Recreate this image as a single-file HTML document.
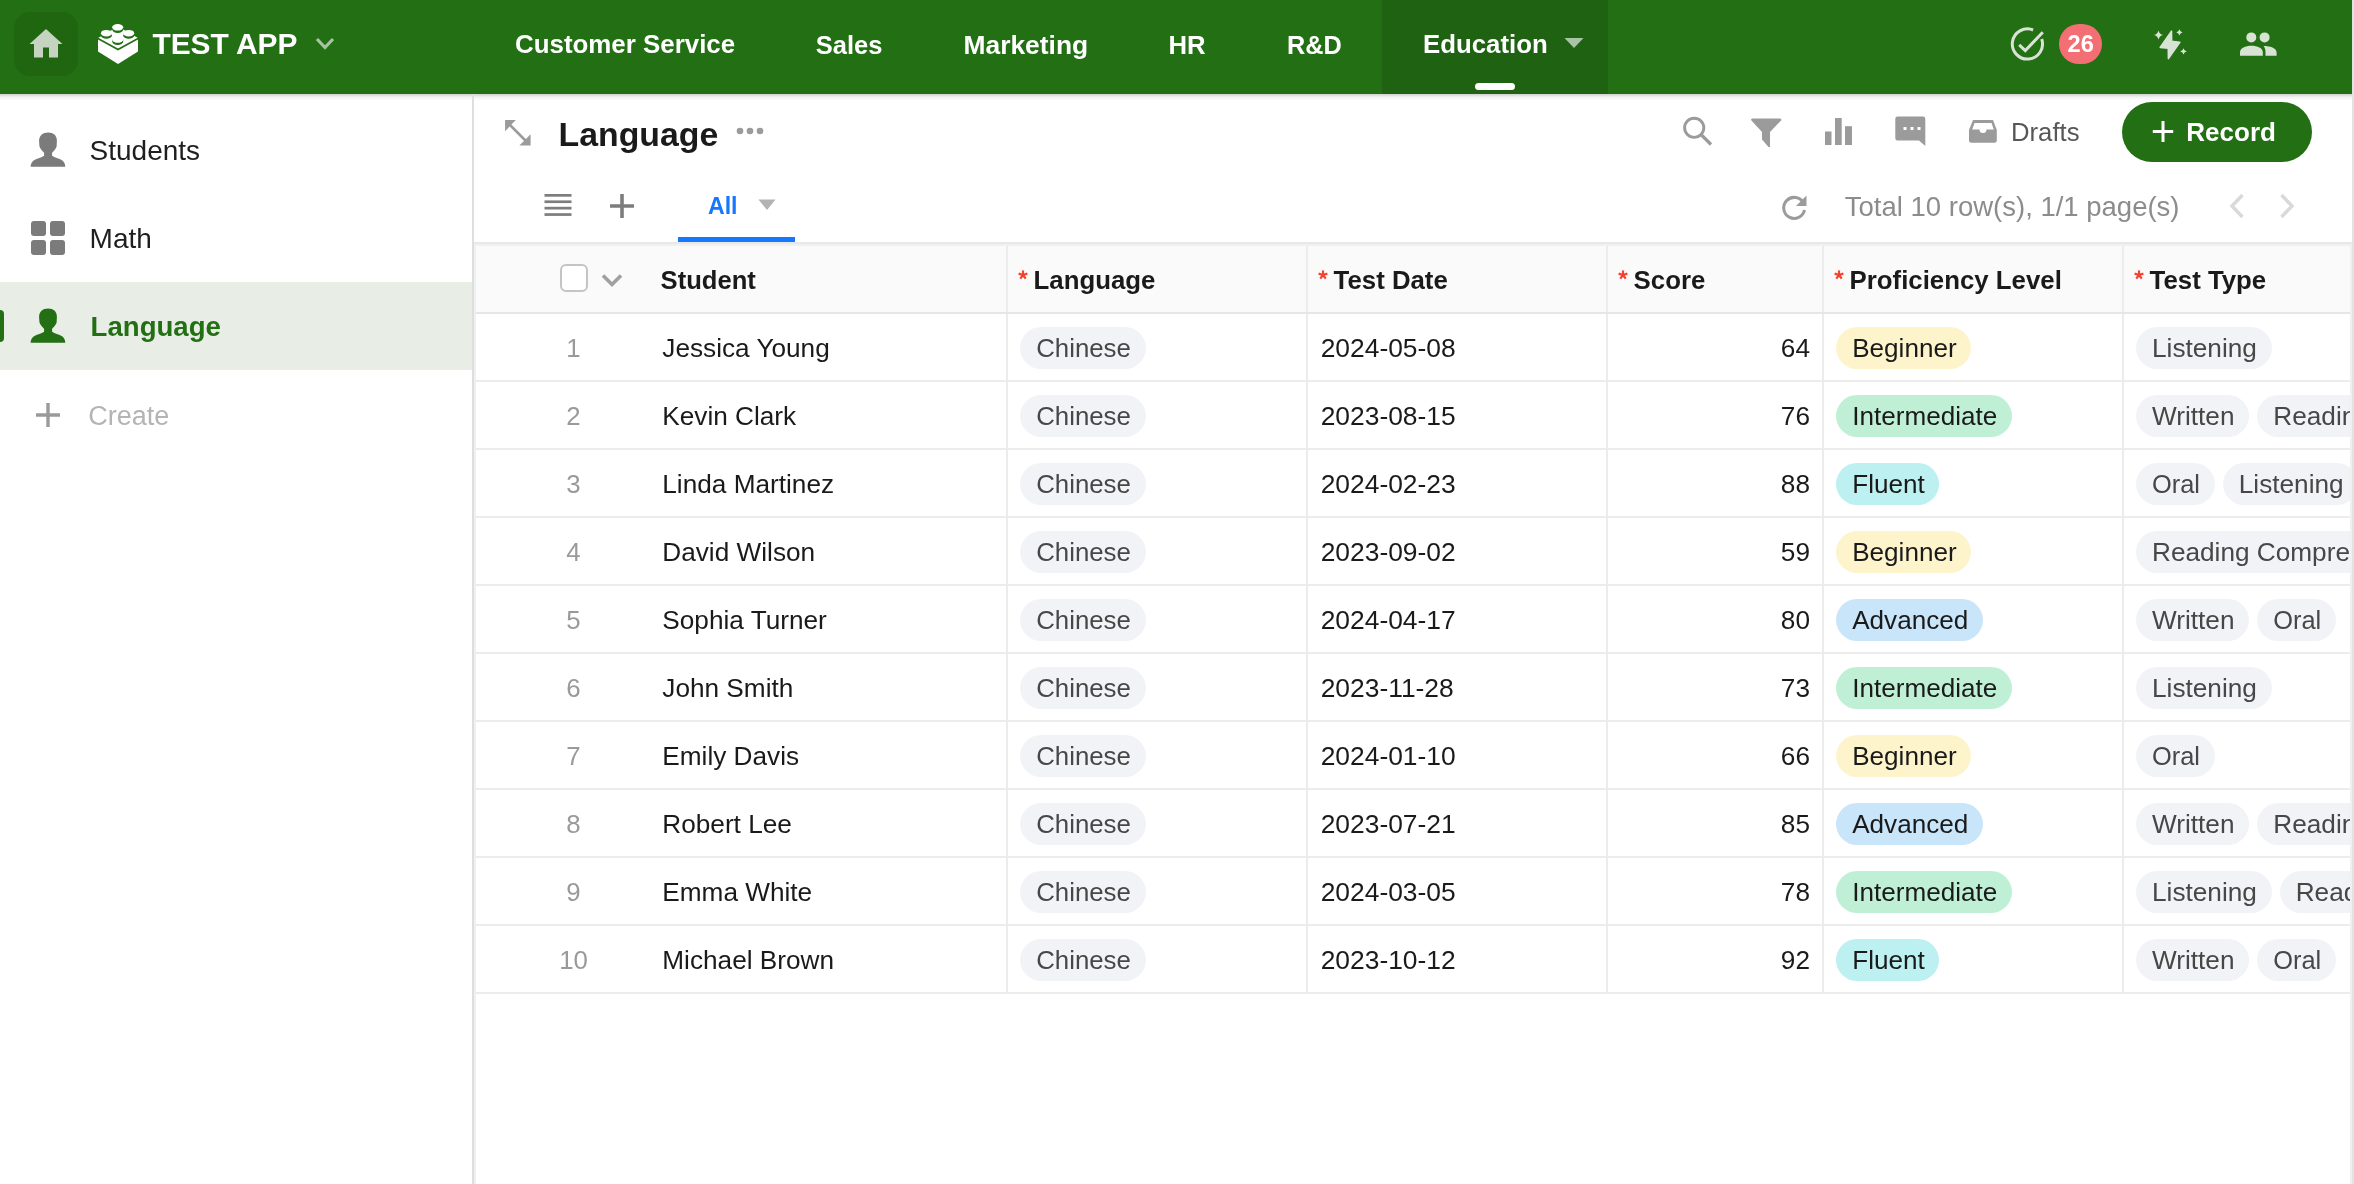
<!DOCTYPE html>
<html><head><meta charset="utf-8"><title>Language</title>
<style>
html,body{margin:0;padding:0;}
body{width:2354px;height:1184px;overflow:hidden;position:relative;background:#fff;font-family:"Liberation Sans",sans-serif;}
.t{position:absolute;white-space:nowrap;}
#root{position:absolute;left:0;top:0;width:2354px;height:1184px;will-change:transform;}
svg{display:block;}
</style></head><body><div id="root">
<div style="position:absolute;left:0px;top:0px;width:2352px;height:94px;background:#236f14;"></div>
<div style="position:absolute;left:0px;top:94px;width:2352px;height:7px;background:linear-gradient(rgba(0,0,0,0.19),rgba(0,0,0,0.05) 45%,rgba(0,0,0,0));"></div>
<div style="position:absolute;left:14px;top:12px;width:64px;height:64px;background:#20650f;border-radius:16px;"></div>
<svg style="position:absolute;left:29px;top:28px;" width="34" height="30" viewBox="0 0 34 30"><path d="M17 1 L33.5 16 L29 16 L29 29.5 L20 29.5 L20 19.5 L14 19.5 L14 29.5 L5 29.5 L5 16 L0.5 16 Z" fill="#c4d4c0"/></svg>
<svg style="position:absolute;left:96px;top:22px;" width="44" height="44" viewBox="0 0 44 44"><path d="M2 16 L22 4.5 L42 16 L42 29.6 L22 42.1 L2 29.6 Z" fill="#fff"/><path d="M1.5 16.2 L22 27.5 L42.5 16.2" fill="none" stroke="#236f14" stroke-width="1.7"/><ellipse cx="21.7" cy="7.6" rx="5.5" ry="3.3" fill="#236f14"/><ellipse cx="21.7" cy="5.3" rx="5.5" ry="3.3" fill="#fff"/><ellipse cx="10.4" cy="13.5" rx="5.5" ry="3.3" fill="#236f14"/><ellipse cx="10.4" cy="11.2" rx="5.5" ry="3.3" fill="#fff"/><ellipse cx="32.7" cy="13.5" rx="5.5" ry="3.3" fill="#236f14"/><ellipse cx="32.7" cy="11.2" rx="5.5" ry="3.3" fill="#fff"/><path d="M16.2 17.3 A5.5 3.3 0 0 0 27.2 17.3 L27.2 19.6 A5.5 3.3 0 0 1 16.2 19.6 Z" fill="#236f14"/><path d="M16.2 17.3 A5.5 3.3 0 0 0 27.2 17.3 L27.2 17.3 A5.5 1.2 0 0 1 16.2 17.3 Z" fill="#fff"/></svg>
<div class="t" style="left:152.40px;top:29.49px;font-size:29.9px;line-height:29.9px;color:#fff;font-weight:bold;">TEST APP</div>
<svg style="position:absolute;left:314px;top:36px;" width="22" height="16" viewBox="0 0 22 16"><path d="M3 3 L11 11.5 L19 3" fill="none" stroke="#a8c3a2" stroke-width="3.2"/></svg>
<div style="position:absolute;left:1382px;top:0px;width:226px;height:94px;background:#1f6212;"></div>
<div class="t" style="left:515.00px;top:32.38px;font-size:25.9px;line-height:25.9px;color:#fff;font-weight:bold;">Customer Service</div>
<div class="t" style="left:815.70px;top:32.71px;font-size:25.5px;line-height:25.5px;color:#fff;font-weight:bold;">Sales</div>
<div class="t" style="left:963.50px;top:31.95px;font-size:26.4px;line-height:26.4px;color:#fff;font-weight:bold;">Marketing</div>
<div class="t" style="left:1168.50px;top:32.54px;font-size:25.7px;line-height:25.7px;color:#fff;font-weight:bold;">HR</div>
<div class="t" style="left:1287.00px;top:32.88px;font-size:25.3px;line-height:25.3px;color:#fff;font-weight:bold;">R&amp;D</div>
<div class="t" style="left:1423.00px;top:32.46px;font-size:25.8px;line-height:25.8px;color:#fff;font-weight:bold;">Education</div>
<svg style="position:absolute;left:1563px;top:37px;" width="22" height="12" viewBox="0 0 22 12"><path d="M1.5 1 L20.5 1 L11 11 Z" fill="#a9c4a4"/></svg>
<div style="position:absolute;left:1475px;top:83px;width:40px;height:7px;background:#fff;border-radius:4px;"></div>
<svg style="position:absolute;left:2008px;top:25px;" width="40" height="40" viewBox="0 0 40 40"><path d="M33.7 14.1 A15.1 15.1 0 1 1 25.1 5.0" fill="none" stroke="#d8e3d5" stroke-width="3"/><path d="M11.2 19.9 L17.3 25.6 L34.8 7.2" fill="none" stroke="#d8e3d5" stroke-width="3"/></svg>
<div style="position:absolute;left:2059px;top:24px;width:43px;height:40px;background:#f46f73;border-radius:20px;"></div>
<div class="t" style="left:2067.60px;top:32.82px;font-size:23.6px;line-height:23.6px;color:#fff;font-weight:bold;">26</div>
<svg style="position:absolute;left:2153px;top:28px;" width="36" height="34" viewBox="0 0 36 34"><g fill="#d8e3d5" stroke="#d8e3d5" stroke-linejoin="round" stroke-width="1.6"><path d="M18.5 3.2 L18.6 13.4 L26.8 14.2 L15.4 30.6 L15.3 20.3 L7.2 19.5 Z"/></g><g fill="#d8e3d5"><path d="M5.5 2.4000000000000004 Q6.328 6.172 10.1 7 Q6.328 7.828 5.5 11.6 Q4.672 7.828 0.9000000000000004 7 Q4.672 6.172 5.5 2.4000000000000004 Z"/><path d="M26.4 1.3000000000000003 Q26.958 3.8420000000000005 29.5 4.4 Q26.958 4.958 26.4 7.5 Q25.842 4.958 23.299999999999997 4.4 Q25.842 3.8420000000000005 26.4 1.3000000000000003 Z"/><path d="M30.5 20.2 Q31.076 22.823999999999998 33.7 23.4 Q31.076 23.976 30.5 26.599999999999998 Q29.924 23.976 27.3 23.4 Q29.924 22.823999999999998 30.5 20.2 Z"/></g></svg>
<svg style="position:absolute;left:2238px;top:30px;" width="40" height="28" viewBox="0 0 40 28"><g fill="#d8e3d5">
<circle cx="13.3" cy="7.4" r="5"/><circle cx="26.6" cy="7.4" r="5"/>
<path d="M2 25.7 L2 22.5 C2 18 7.5 15.8 13.3 15.8 C19.4 15.8 24.8 18 24.8 22.5 L24.8 25.7 Z"/>
<path d="M25.6 16 C32 16 38.6 18 38.6 22.5 L38.6 25.7 L27.5 25.7 L27.5 22 C27.5 19.5 26.8 17.5 25.6 16 Z"/>
</g></svg>
<div style="position:absolute;left:2352px;top:0px;width:2px;height:1184px;background:#e4e4e4;"></div>
<div style="position:absolute;left:472px;top:94px;width:2px;height:1090px;background:#dedede;"></div>
<svg style="position:absolute;left:30px;top:132px;" width="36" height="36" viewBox="0 0 36 36"><path fill="#7b7b7b" d="M18.2 0.4 C23.3 0.4 26.9 3.3 26.9 8.6 C26.9 10.8 26.7 12.3 26.7 13.7 C26.7 15.2 25.5 17.3 22.1 20.8 L22.1 23.8 C24 25.4 28 26.4 30.2 27.3 C33.6 28.8 35.3 31.5 35.3 34.8 L0.6 34.8 C0.6 31.5 2.4 28.8 5.9 27.3 C8 26.4 12.2 25.4 14.1 23.8 L14.1 20.8 C10.7 17.3 9.4 15.2 9.4 13.7 C9.4 12.3 9.1 10.8 9.1 8.8 C9.1 3.6 12.6 0.4 18.2 0.4 Z"/></svg>
<div class="t" style="left:89.60px;top:136.70px;font-size:28px;line-height:28px;color:#1f1f1f;font-weight:normal;">Students</div>
<svg style="position:absolute;left:31px;top:221px;" width="34" height="34" viewBox="0 0 34 34"><g fill="#7b7b7b"><rect x="0" y="0" width="15" height="15" rx="3"/><rect x="19" y="0" width="15" height="15" rx="3"/><rect x="0" y="19" width="15" height="15" rx="3"/><rect x="19" y="19" width="15" height="15" rx="3"/></g></svg>
<div class="t" style="left:89.60px;top:224.50px;font-size:28px;line-height:28px;color:#1f1f1f;font-weight:normal;">Math</div>
<div style="position:absolute;left:0px;top:282px;width:472px;height:88px;background:#e8eee6;"></div>
<div style="position:absolute;left:-4px;top:310px;width:8px;height:32px;background:#236f14;border-radius:4px;"></div>
<svg style="position:absolute;left:30px;top:308px;" width="36" height="36" viewBox="0 0 36 36"><path fill="#236f14" d="M18.2 0.4 C23.3 0.4 26.9 3.3 26.9 8.6 C26.9 10.8 26.7 12.3 26.7 13.7 C26.7 15.2 25.5 17.3 22.1 20.8 L22.1 23.8 C24 25.4 28 26.4 30.2 27.3 C33.6 28.8 35.3 31.5 35.3 34.8 L0.6 34.8 C0.6 31.5 2.4 28.8 5.9 27.3 C8 26.4 12.2 25.4 14.1 23.8 L14.1 20.8 C10.7 17.3 9.4 15.2 9.4 13.7 C9.4 12.3 9.1 10.8 9.1 8.8 C9.1 3.6 12.6 0.4 18.2 0.4 Z"/></svg>
<div class="t" style="left:90.60px;top:313.14px;font-size:27.6px;line-height:27.6px;color:#236f14;font-weight:bold;">Language</div>
<svg style="position:absolute;left:35px;top:402px;" width="26" height="26" viewBox="0 0 26 26"><path d="M13 1 V25 M1 13 H25" stroke="#9a9a9a" stroke-width="3.4"/></svg>
<div class="t" style="left:88.30px;top:402.74px;font-size:27px;line-height:27px;color:#b4b4b4;font-weight:normal;">Create</div>
<svg style="position:absolute;left:503px;top:118px;" width="30" height="30" viewBox="0 0 30 30"><path fill="#9b9b9b" d="M2.1 1.9 L12.9 1.9 L8.4 6.6 L22.9 21.0 L27.6 16.3 L27.6 27.6 L16.3 27.6 L21.0 22.9 L6.6 8.4 L2.1 13.2 Z"/></svg>
<div class="t" style="left:558.60px;top:117.99px;font-size:33.8px;line-height:33.8px;color:#1a1a1a;font-weight:bold;">Language</div>
<svg style="position:absolute;left:735px;top:126px;" width="32" height="10" viewBox="0 0 32 10"><g fill="#9b9b9b"><circle cx="5" cy="5" r="3.3"/><circle cx="15" cy="5" r="3.3"/><circle cx="25" cy="5" r="3.3"/></g></svg>
<svg style="position:absolute;left:1681px;top:114px;" width="34" height="34" viewBox="0 0 34 34"><circle cx="13.2" cy="13.8" r="9.6" fill="none" stroke="#9b9b9b" stroke-width="2.9"/><path d="M20 20.5 L30 30.5" stroke="#9b9b9b" stroke-width="3.2"/></svg>
<svg style="position:absolute;left:1750px;top:117px;" width="34" height="32" viewBox="0 0 34 32"><path fill="#9b9b9b" d="M1 3 Q1 1.5 2.5 1.5 L30 1.5 Q31.5 1.5 31.5 3 L20 15 L20 30 L18.5 30 L12 22.5 L12 15 Z"/></svg>
<svg style="position:absolute;left:1824px;top:116px;" width="30" height="32" viewBox="0 0 30 32"><g fill="#9b9b9b"><rect x="1" y="15.5" width="6.5" height="13.5"/><rect x="11" y="2" width="6.7" height="27"/><rect x="21" y="10.2" width="7" height="18.8"/></g></svg>
<svg style="position:absolute;left:1894px;top:115px;" width="34" height="34" viewBox="0 0 34 34"><path fill="#9b9b9b" d="M3.5 1.5 L29 1.5 Q31.3 1.5 31.3 3.8 L31.3 31 L25 25.5 L3.5 25.5 Q1.3 25.5 1.3 23.3 L1.3 3.8 Q1.3 1.5 3.5 1.5 Z"/><g fill="#fff"><rect x="9.5" y="12" width="3" height="3"/><rect x="16.5" y="12" width="3" height="3"/><rect x="23.5" y="12" width="3" height="3"/></g></svg>
<svg style="position:absolute;left:1968px;top:118px;" width="30" height="27" viewBox="0 0 30 27"><path fill="#9b9b9b" d="M5 2 L25 2 L28.8 12 L28.8 22.5 Q28.8 24.8 26.5 24.8 L3.3 24.8 Q1 24.8 1 22.5 L1 12 Z"/><path fill="#fff" d="M6.5 5 L23.5 5 L25.8 11.5 L18.5 11.5 Q18.5 15 15 15 Q11.5 15 11.5 11.5 L4.2 11.5 Z"/></svg>
<div class="t" style="left:2011.00px;top:120.44px;font-size:25.7px;line-height:25.7px;color:#575757;font-weight:normal;">Drafts</div>
<div style="position:absolute;left:2122px;top:102px;width:190px;height:60px;background:#236f14;border-radius:30px;"></div>
<svg style="position:absolute;left:2151px;top:119px;" width="24" height="24" viewBox="0 0 24 24"><path d="M12 2 V23 M1.8 12.5 H22.2" stroke="#fff" stroke-width="3"/></svg>
<div class="t" style="left:2186.30px;top:119.39px;font-size:26px;line-height:26px;color:#fff;font-weight:bold;">Record</div>
<svg style="position:absolute;left:543px;top:192px;" width="30" height="27" viewBox="0 0 30 27"><g fill="#7d7d7d"><rect x="1.5" y="2" width="27" height="2.7"/><rect x="1.5" y="8.4" width="27" height="2.7"/><rect x="1.5" y="14.8" width="27" height="2.7"/><rect x="1.5" y="21.2" width="27" height="2.7"/></g></svg>
<svg style="position:absolute;left:608px;top:192px;" width="28" height="28" viewBox="0 0 28 28"><path d="M14 2 V26 M2 14 H26" stroke="#7d7d7d" stroke-width="3.6"/></svg>
<div class="t" style="left:708.00px;top:195.45px;font-size:23.1px;line-height:23.1px;color:#1677ff;font-weight:bold;">All</div>
<svg style="position:absolute;left:757px;top:198px;" width="20" height="14" viewBox="0 0 20 14"><path d="M1.5 1.5 L18.5 1.5 L10 12 Z" fill="#b3b3b3"/></svg>
<div style="position:absolute;left:678px;top:237px;width:117px;height:6px;background:#1677ff;"></div>
<div style="position:absolute;left:474px;top:242px;width:1878px;height:2px;background:#e8e8e8;"></div>
<svg style="position:absolute;left:1779px;top:193px;" width="30" height="30" viewBox="0 0 30 30"><path d="M24.5 10 A10.5 10.5 0 1 0 25.5 17" fill="none" stroke="#9b9b9b" stroke-width="3"/><path d="M27.5 2.5 L27.5 13 L17 13 Z" fill="#9b9b9b"/></svg>
<div class="t" style="left:1844.80px;top:192.92px;font-size:27.5px;line-height:27.5px;color:#8c8c8c;font-weight:normal;">Total 10 row(s), 1/1 page(s)</div>
<svg style="position:absolute;left:2227px;top:192px;" width="20" height="28" viewBox="0 0 20 28"><path d="M15.5 3 L5 14 L15.5 25" fill="none" stroke="#d9d9d9" stroke-width="3.4"/></svg>
<svg style="position:absolute;left:2277px;top:192px;" width="20" height="28" viewBox="0 0 20 28"><path d="M4.5 3 L15 14 L4.5 25" fill="none" stroke="#d9d9d9" stroke-width="3.4"/></svg>
<div style="position:absolute;left:474px;top:244px;width:1876px;height:2px;background:#f0f0f0;"></div>
<div style="position:absolute;left:474px;top:244px;width:2px;height:940px;background:#f0f0f0;"></div>
<div style="position:absolute;left:2350px;top:244px;width:2px;height:940px;background:#f0f0f0;"></div>
<div style="position:absolute;left:476px;top:246px;width:1874px;height:66px;background:#fafafa;"></div>
<div style="position:absolute;left:476px;top:312px;width:1874px;height:2px;background:#e6e6e6;"></div>
<div style="position:absolute;left:1006px;top:246px;width:2px;height:66px;background:#ececec;"></div>
<div style="position:absolute;left:1006px;top:314px;width:2px;height:680px;background:#ececec;"></div>
<div style="position:absolute;left:1306px;top:246px;width:2px;height:66px;background:#ececec;"></div>
<div style="position:absolute;left:1306px;top:314px;width:2px;height:680px;background:#ececec;"></div>
<div style="position:absolute;left:1606px;top:246px;width:2px;height:66px;background:#ececec;"></div>
<div style="position:absolute;left:1606px;top:314px;width:2px;height:680px;background:#ececec;"></div>
<div style="position:absolute;left:1822px;top:246px;width:2px;height:66px;background:#ececec;"></div>
<div style="position:absolute;left:1822px;top:314px;width:2px;height:680px;background:#ececec;"></div>
<div style="position:absolute;left:2122px;top:246px;width:2px;height:66px;background:#ececec;"></div>
<div style="position:absolute;left:2122px;top:314px;width:2px;height:680px;background:#ececec;"></div>
<div style="position:absolute;left:560px;top:264px;width:28px;height:28px;background:#fff;border:2px solid #c4c4c4;border-radius:6px;box-sizing:border-box;"></div>
<svg style="position:absolute;left:600px;top:272px;" width="24" height="18" viewBox="0 0 24 18"><path d="M3 3.5 L12 12.5 L21 3.5" fill="none" stroke="#a0a0a0" stroke-width="3.6"/></svg>
<div class="t" style="left:660.60px;top:268.13px;font-size:25.6px;line-height:25.6px;color:#1a1a1a;font-weight:bold;">Student</div>
<svg style="position:absolute;left:1016.3px;top:268px;" width="14" height="14" viewBox="0 0 14 14"><g stroke="#f5412f" stroke-width="2.2"><path d="M7 7 L7.00 2.40"/><path d="M7 7 L11.37 5.58"/><path d="M7 7 L9.70 10.72"/><path d="M7 7 L4.30 10.72"/><path d="M7 7 L2.63 5.58"/></g></svg>
<div class="t" style="left:1033.60px;top:267.96px;font-size:25.8px;line-height:25.8px;color:#1a1a1a;font-weight:bold;">Language</div>
<svg style="position:absolute;left:1316.3px;top:268px;" width="14" height="14" viewBox="0 0 14 14"><g stroke="#f5412f" stroke-width="2.2"><path d="M7 7 L7.00 2.40"/><path d="M7 7 L11.37 5.58"/><path d="M7 7 L9.70 10.72"/><path d="M7 7 L4.30 10.72"/><path d="M7 7 L2.63 5.58"/></g></svg>
<div class="t" style="left:1333.60px;top:267.96px;font-size:25.8px;line-height:25.8px;color:#1a1a1a;font-weight:bold;">Test Date</div>
<svg style="position:absolute;left:1616.3px;top:268px;" width="14" height="14" viewBox="0 0 14 14"><g stroke="#f5412f" stroke-width="2.2"><path d="M7 7 L7.00 2.40"/><path d="M7 7 L11.37 5.58"/><path d="M7 7 L9.70 10.72"/><path d="M7 7 L4.30 10.72"/><path d="M7 7 L2.63 5.58"/></g></svg>
<div class="t" style="left:1633.60px;top:267.96px;font-size:25.8px;line-height:25.8px;color:#1a1a1a;font-weight:bold;">Score</div>
<svg style="position:absolute;left:1832.3px;top:268px;" width="14" height="14" viewBox="0 0 14 14"><g stroke="#f5412f" stroke-width="2.2"><path d="M7 7 L7.00 2.40"/><path d="M7 7 L11.37 5.58"/><path d="M7 7 L9.70 10.72"/><path d="M7 7 L4.30 10.72"/><path d="M7 7 L2.63 5.58"/></g></svg>
<div class="t" style="left:1849.60px;top:267.96px;font-size:25.8px;line-height:25.8px;color:#1a1a1a;font-weight:bold;">Proficiency Level</div>
<svg style="position:absolute;left:2132.3px;top:268px;" width="14" height="14" viewBox="0 0 14 14"><g stroke="#f5412f" stroke-width="2.2"><path d="M7 7 L7.00 2.40"/><path d="M7 7 L11.37 5.58"/><path d="M7 7 L9.70 10.72"/><path d="M7 7 L4.30 10.72"/><path d="M7 7 L2.63 5.58"/></g></svg>
<div class="t" style="left:2149.60px;top:267.96px;font-size:25.8px;line-height:25.8px;color:#1a1a1a;font-weight:bold;">Test Type</div>
<div style="position:absolute;left:476px;top:380px;width:1874px;height:2px;background:#ececec;"></div>
<div class="t" style="left:523.5px;width:100px;text-align:center;top:335.76px;font-size:25.8px;line-height:25.8px;color:#9a9a9a;">1</div>
<div class="t" style="left:662.30px;top:335.42px;font-size:26.2px;line-height:26.2px;color:#1a1a1a;font-weight:normal;">Jessica Young</div>
<div style="position:absolute;left:1020.2px;top:326.7px;width:125.5px;height:42px;background:#f2f3f6;border-radius:21px;"></div>
<div class="t" style="left:1036.20px;top:335.86px;font-size:25.8px;line-height:25.8px;color:#474747;font-weight:normal;">Chinese</div>
<div class="t" style="left:1320.70px;top:335.25px;font-size:26.4px;line-height:26.4px;color:#1a1a1a;font-weight:normal;">2024-05-08</div>
<div class="t" style="right:544.06px;top:335.42px;font-size:26.2px;line-height:26.2px;color:#1a1a1a;font-weight:normal;">64</div>
<div style="position:absolute;left:1836.2px;top:326.7px;width:135.3px;height:42px;background:#fdf4cc;border-radius:21px;"></div>
<div class="t" style="left:1852.20px;top:335.01px;font-size:26.1px;line-height:26.1px;color:#1a1a1a;font-weight:normal;">Beginner</div>
<div style="position:absolute;left:476px;top:448px;width:1874px;height:2px;background:#ececec;"></div>
<div class="t" style="left:523.5px;width:100px;text-align:center;top:403.76px;font-size:25.8px;line-height:25.8px;color:#9a9a9a;">2</div>
<div class="t" style="left:662.30px;top:403.42px;font-size:26.2px;line-height:26.2px;color:#1a1a1a;font-weight:normal;">Kevin Clark</div>
<div style="position:absolute;left:1020.2px;top:394.7px;width:125.5px;height:42px;background:#f2f3f6;border-radius:21px;"></div>
<div class="t" style="left:1036.20px;top:403.86px;font-size:25.8px;line-height:25.8px;color:#474747;font-weight:normal;">Chinese</div>
<div class="t" style="left:1320.70px;top:403.25px;font-size:26.4px;line-height:26.4px;color:#1a1a1a;font-weight:normal;">2023-08-15</div>
<div class="t" style="right:544.06px;top:403.42px;font-size:26.2px;line-height:26.2px;color:#1a1a1a;font-weight:normal;">76</div>
<div style="position:absolute;left:1836.2px;top:394.7px;width:175.9px;height:42px;background:#bff0d6;border-radius:21px;"></div>
<div class="t" style="left:1852.20px;top:403.01px;font-size:26.1px;line-height:26.1px;color:#1a1a1a;font-weight:normal;">Intermediate</div>
<div style="position:absolute;left:476px;top:516px;width:1874px;height:2px;background:#ececec;"></div>
<div class="t" style="left:523.5px;width:100px;text-align:center;top:471.76px;font-size:25.8px;line-height:25.8px;color:#9a9a9a;">3</div>
<div class="t" style="left:662.30px;top:471.42px;font-size:26.2px;line-height:26.2px;color:#1a1a1a;font-weight:normal;">Linda Martinez</div>
<div style="position:absolute;left:1020.2px;top:462.7px;width:125.5px;height:42px;background:#f2f3f6;border-radius:21px;"></div>
<div class="t" style="left:1036.20px;top:471.86px;font-size:25.8px;line-height:25.8px;color:#474747;font-weight:normal;">Chinese</div>
<div class="t" style="left:1320.70px;top:471.25px;font-size:26.4px;line-height:26.4px;color:#1a1a1a;font-weight:normal;">2024-02-23</div>
<div class="t" style="right:544.06px;top:471.42px;font-size:26.2px;line-height:26.2px;color:#1a1a1a;font-weight:normal;">88</div>
<div style="position:absolute;left:1836.2px;top:462.7px;width:103.3px;height:42px;background:#bdf0f0;border-radius:21px;"></div>
<div class="t" style="left:1852.20px;top:471.01px;font-size:26.1px;line-height:26.1px;color:#1a1a1a;font-weight:normal;">Fluent</div>
<div style="position:absolute;left:476px;top:584px;width:1874px;height:2px;background:#ececec;"></div>
<div class="t" style="left:523.5px;width:100px;text-align:center;top:539.76px;font-size:25.8px;line-height:25.8px;color:#9a9a9a;">4</div>
<div class="t" style="left:662.30px;top:539.42px;font-size:26.2px;line-height:26.2px;color:#1a1a1a;font-weight:normal;">David Wilson</div>
<div style="position:absolute;left:1020.2px;top:530.7px;width:125.5px;height:42px;background:#f2f3f6;border-radius:21px;"></div>
<div class="t" style="left:1036.20px;top:539.86px;font-size:25.8px;line-height:25.8px;color:#474747;font-weight:normal;">Chinese</div>
<div class="t" style="left:1320.70px;top:539.25px;font-size:26.4px;line-height:26.4px;color:#1a1a1a;font-weight:normal;">2023-09-02</div>
<div class="t" style="right:544.06px;top:539.42px;font-size:26.2px;line-height:26.2px;color:#1a1a1a;font-weight:normal;">59</div>
<div style="position:absolute;left:1836.2px;top:530.7px;width:135.3px;height:42px;background:#fdf4cc;border-radius:21px;"></div>
<div class="t" style="left:1852.20px;top:539.01px;font-size:26.1px;line-height:26.1px;color:#1a1a1a;font-weight:normal;">Beginner</div>
<div style="position:absolute;left:476px;top:652px;width:1874px;height:2px;background:#ececec;"></div>
<div class="t" style="left:523.5px;width:100px;text-align:center;top:607.76px;font-size:25.8px;line-height:25.8px;color:#9a9a9a;">5</div>
<div class="t" style="left:662.30px;top:607.42px;font-size:26.2px;line-height:26.2px;color:#1a1a1a;font-weight:normal;">Sophia Turner</div>
<div style="position:absolute;left:1020.2px;top:598.7px;width:125.5px;height:42px;background:#f2f3f6;border-radius:21px;"></div>
<div class="t" style="left:1036.20px;top:607.86px;font-size:25.8px;line-height:25.8px;color:#474747;font-weight:normal;">Chinese</div>
<div class="t" style="left:1320.70px;top:607.25px;font-size:26.4px;line-height:26.4px;color:#1a1a1a;font-weight:normal;">2024-04-17</div>
<div class="t" style="right:544.06px;top:607.42px;font-size:26.2px;line-height:26.2px;color:#1a1a1a;font-weight:normal;">80</div>
<div style="position:absolute;left:1836.2px;top:598.7px;width:146.9px;height:42px;background:#c9e5f9;border-radius:21px;"></div>
<div class="t" style="left:1852.20px;top:607.01px;font-size:26.1px;line-height:26.1px;color:#1a1a1a;font-weight:normal;">Advanced</div>
<div style="position:absolute;left:476px;top:720px;width:1874px;height:2px;background:#ececec;"></div>
<div class="t" style="left:523.5px;width:100px;text-align:center;top:675.76px;font-size:25.8px;line-height:25.8px;color:#9a9a9a;">6</div>
<div class="t" style="left:662.30px;top:675.42px;font-size:26.2px;line-height:26.2px;color:#1a1a1a;font-weight:normal;">John Smith</div>
<div style="position:absolute;left:1020.2px;top:666.7px;width:125.5px;height:42px;background:#f2f3f6;border-radius:21px;"></div>
<div class="t" style="left:1036.20px;top:675.86px;font-size:25.8px;line-height:25.8px;color:#474747;font-weight:normal;">Chinese</div>
<div class="t" style="left:1320.70px;top:675.25px;font-size:26.4px;line-height:26.4px;color:#1a1a1a;font-weight:normal;">2023-11-28</div>
<div class="t" style="right:544.06px;top:675.42px;font-size:26.2px;line-height:26.2px;color:#1a1a1a;font-weight:normal;">73</div>
<div style="position:absolute;left:1836.2px;top:666.7px;width:175.9px;height:42px;background:#bff0d6;border-radius:21px;"></div>
<div class="t" style="left:1852.20px;top:675.01px;font-size:26.1px;line-height:26.1px;color:#1a1a1a;font-weight:normal;">Intermediate</div>
<div style="position:absolute;left:476px;top:788px;width:1874px;height:2px;background:#ececec;"></div>
<div class="t" style="left:523.5px;width:100px;text-align:center;top:743.76px;font-size:25.8px;line-height:25.8px;color:#9a9a9a;">7</div>
<div class="t" style="left:662.30px;top:743.42px;font-size:26.2px;line-height:26.2px;color:#1a1a1a;font-weight:normal;">Emily Davis</div>
<div style="position:absolute;left:1020.2px;top:734.7px;width:125.5px;height:42px;background:#f2f3f6;border-radius:21px;"></div>
<div class="t" style="left:1036.20px;top:743.86px;font-size:25.8px;line-height:25.8px;color:#474747;font-weight:normal;">Chinese</div>
<div class="t" style="left:1320.70px;top:743.25px;font-size:26.4px;line-height:26.4px;color:#1a1a1a;font-weight:normal;">2024-01-10</div>
<div class="t" style="right:544.06px;top:743.42px;font-size:26.2px;line-height:26.2px;color:#1a1a1a;font-weight:normal;">66</div>
<div style="position:absolute;left:1836.2px;top:734.7px;width:135.3px;height:42px;background:#fdf4cc;border-radius:21px;"></div>
<div class="t" style="left:1852.20px;top:743.01px;font-size:26.1px;line-height:26.1px;color:#1a1a1a;font-weight:normal;">Beginner</div>
<div style="position:absolute;left:476px;top:856px;width:1874px;height:2px;background:#ececec;"></div>
<div class="t" style="left:523.5px;width:100px;text-align:center;top:811.76px;font-size:25.8px;line-height:25.8px;color:#9a9a9a;">8</div>
<div class="t" style="left:662.30px;top:811.42px;font-size:26.2px;line-height:26.2px;color:#1a1a1a;font-weight:normal;">Robert Lee</div>
<div style="position:absolute;left:1020.2px;top:802.7px;width:125.5px;height:42px;background:#f2f3f6;border-radius:21px;"></div>
<div class="t" style="left:1036.20px;top:811.86px;font-size:25.8px;line-height:25.8px;color:#474747;font-weight:normal;">Chinese</div>
<div class="t" style="left:1320.70px;top:811.25px;font-size:26.4px;line-height:26.4px;color:#1a1a1a;font-weight:normal;">2023-07-21</div>
<div class="t" style="right:544.06px;top:811.42px;font-size:26.2px;line-height:26.2px;color:#1a1a1a;font-weight:normal;">85</div>
<div style="position:absolute;left:1836.2px;top:802.7px;width:146.9px;height:42px;background:#c9e5f9;border-radius:21px;"></div>
<div class="t" style="left:1852.20px;top:811.01px;font-size:26.1px;line-height:26.1px;color:#1a1a1a;font-weight:normal;">Advanced</div>
<div style="position:absolute;left:476px;top:924px;width:1874px;height:2px;background:#ececec;"></div>
<div class="t" style="left:523.5px;width:100px;text-align:center;top:879.76px;font-size:25.8px;line-height:25.8px;color:#9a9a9a;">9</div>
<div class="t" style="left:662.30px;top:879.42px;font-size:26.2px;line-height:26.2px;color:#1a1a1a;font-weight:normal;">Emma White</div>
<div style="position:absolute;left:1020.2px;top:870.7px;width:125.5px;height:42px;background:#f2f3f6;border-radius:21px;"></div>
<div class="t" style="left:1036.20px;top:879.86px;font-size:25.8px;line-height:25.8px;color:#474747;font-weight:normal;">Chinese</div>
<div class="t" style="left:1320.70px;top:879.25px;font-size:26.4px;line-height:26.4px;color:#1a1a1a;font-weight:normal;">2024-03-05</div>
<div class="t" style="right:544.06px;top:879.42px;font-size:26.2px;line-height:26.2px;color:#1a1a1a;font-weight:normal;">78</div>
<div style="position:absolute;left:1836.2px;top:870.7px;width:175.9px;height:42px;background:#bff0d6;border-radius:21px;"></div>
<div class="t" style="left:1852.20px;top:879.01px;font-size:26.1px;line-height:26.1px;color:#1a1a1a;font-weight:normal;">Intermediate</div>
<div style="position:absolute;left:476px;top:992px;width:1874px;height:2px;background:#ececec;"></div>
<div class="t" style="left:523.5px;width:100px;text-align:center;top:947.76px;font-size:25.8px;line-height:25.8px;color:#9a9a9a;">10</div>
<div class="t" style="left:662.30px;top:947.42px;font-size:26.2px;line-height:26.2px;color:#1a1a1a;font-weight:normal;">Michael Brown</div>
<div style="position:absolute;left:1020.2px;top:938.7px;width:125.5px;height:42px;background:#f2f3f6;border-radius:21px;"></div>
<div class="t" style="left:1036.20px;top:947.86px;font-size:25.8px;line-height:25.8px;color:#474747;font-weight:normal;">Chinese</div>
<div class="t" style="left:1320.70px;top:947.25px;font-size:26.4px;line-height:26.4px;color:#1a1a1a;font-weight:normal;">2023-10-12</div>
<div class="t" style="right:544.06px;top:947.42px;font-size:26.2px;line-height:26.2px;color:#1a1a1a;font-weight:normal;">92</div>
<div style="position:absolute;left:1836.2px;top:938.7px;width:103.3px;height:42px;background:#bdf0f0;border-radius:21px;"></div>
<div class="t" style="left:1852.20px;top:947.01px;font-size:26.1px;line-height:26.1px;color:#1a1a1a;font-weight:normal;">Fluent</div>
<div style="position:absolute;left:2124px;top:314px;width:226px;height:680px;overflow:hidden;">
<div style="position:absolute;left:12.0px;top:12.7px;width:135.7px;height:42px;background:#f2f3f6;border-radius:21px;"></div>
<div class="t" style="left:28.00px;top:20.92px;font-size:26.2px;line-height:26.2px;color:#474747;">Listening</div>
<div style="position:absolute;left:12.0px;top:80.7px;width:113.3px;height:42px;background:#f2f3f6;border-radius:21px;"></div>
<div class="t" style="left:28.00px;top:88.92px;font-size:26.2px;line-height:26.2px;color:#474747;">Written</div>
<div style="position:absolute;left:133.3px;top:80.7px;width:128.4px;height:42px;background:#f2f3f6;border-radius:21px;"></div>
<div class="t" style="left:149.30px;top:88.92px;font-size:26.2px;line-height:26.2px;color:#474747;">Reading</div>
<div style="position:absolute;left:12.0px;top:148.7px;width:78.8px;height:42px;background:#f2f3f6;border-radius:21px;"></div>
<div class="t" style="left:28.00px;top:158.20px;font-size:25.4px;line-height:25.4px;color:#474747;">Oral</div>
<div style="position:absolute;left:98.8px;top:148.7px;width:135.7px;height:42px;background:#f2f3f6;border-radius:21px;"></div>
<div class="t" style="left:114.80px;top:156.92px;font-size:26.2px;line-height:26.2px;color:#474747;">Listening</div>
<div style="position:absolute;left:12.0px;top:216.7px;width:320.6px;height:42px;background:#f2f3f6;border-radius:21px;"></div>
<div class="t" style="left:28.00px;top:224.92px;font-size:26.2px;line-height:26.2px;color:#474747;">Reading Comprehension</div>
<div style="position:absolute;left:12.0px;top:284.7px;width:113.3px;height:42px;background:#f2f3f6;border-radius:21px;"></div>
<div class="t" style="left:28.00px;top:292.92px;font-size:26.2px;line-height:26.2px;color:#474747;">Written</div>
<div style="position:absolute;left:133.3px;top:284.7px;width:78.8px;height:42px;background:#f2f3f6;border-radius:21px;"></div>
<div class="t" style="left:149.30px;top:294.20px;font-size:25.4px;line-height:25.4px;color:#474747;">Oral</div>
<div style="position:absolute;left:12.0px;top:352.7px;width:135.7px;height:42px;background:#f2f3f6;border-radius:21px;"></div>
<div class="t" style="left:28.00px;top:360.92px;font-size:26.2px;line-height:26.2px;color:#474747;">Listening</div>
<div style="position:absolute;left:12.0px;top:420.7px;width:78.8px;height:42px;background:#f2f3f6;border-radius:21px;"></div>
<div class="t" style="left:28.00px;top:430.20px;font-size:25.4px;line-height:25.4px;color:#474747;">Oral</div>
<div style="position:absolute;left:12.0px;top:488.7px;width:113.3px;height:42px;background:#f2f3f6;border-radius:21px;"></div>
<div class="t" style="left:28.00px;top:496.92px;font-size:26.2px;line-height:26.2px;color:#474747;">Written</div>
<div style="position:absolute;left:133.3px;top:488.7px;width:128.4px;height:42px;background:#f2f3f6;border-radius:21px;"></div>
<div class="t" style="left:149.30px;top:496.92px;font-size:26.2px;line-height:26.2px;color:#474747;">Reading</div>
<div style="position:absolute;left:12.0px;top:556.7px;width:135.7px;height:42px;background:#f2f3f6;border-radius:21px;"></div>
<div class="t" style="left:28.00px;top:564.92px;font-size:26.2px;line-height:26.2px;color:#474747;">Listening</div>
<div style="position:absolute;left:155.7px;top:556.7px;width:128.4px;height:42px;background:#f2f3f6;border-radius:21px;"></div>
<div class="t" style="left:171.70px;top:564.92px;font-size:26.2px;line-height:26.2px;color:#474747;">Reading</div>
<div style="position:absolute;left:12.0px;top:624.7px;width:113.3px;height:42px;background:#f2f3f6;border-radius:21px;"></div>
<div class="t" style="left:28.00px;top:632.92px;font-size:26.2px;line-height:26.2px;color:#474747;">Written</div>
<div style="position:absolute;left:133.3px;top:624.7px;width:78.8px;height:42px;background:#f2f3f6;border-radius:21px;"></div>
<div class="t" style="left:149.30px;top:634.20px;font-size:25.4px;line-height:25.4px;color:#474747;">Oral</div>
</div>
</div></body></html>
